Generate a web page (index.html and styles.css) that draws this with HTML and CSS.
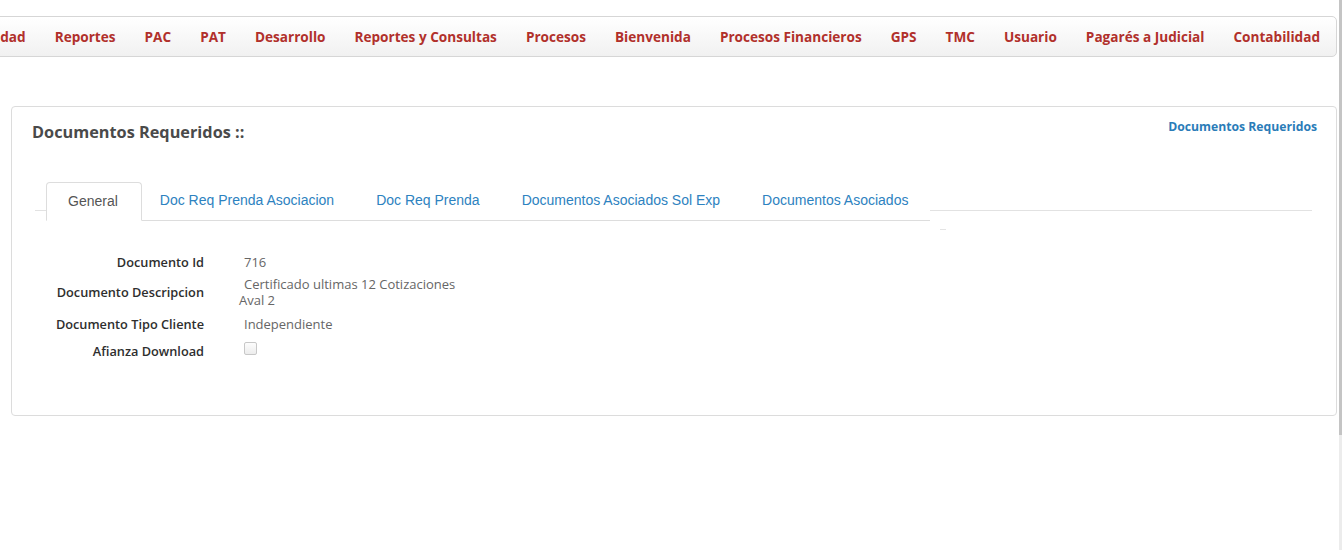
FILE: index.html
```html
<!DOCTYPE html>
<html lang="es">
<head>
<meta charset="utf-8">
<title>Documentos Requeridos</title>
<link rel="stylesheet" href="styles.css">
</head>
<body>
<div class="scrollbar"></div>
<nav class="topnav">
  <ul class="menu">
    <li>Contabilidad</li>
    <li>Reportes</li>
    <li>PAC</li>
    <li>PAT</li>
    <li>Desarrollo</li>
    <li>Reportes y Consultas</li>
    <li>Procesos</li>
    <li>Bienvenida</li>
    <li>Procesos Financieros</li>
    <li>GPS</li>
    <li>TMC</li>
    <li>Usuario</li>
    <li>Pagarés a Judicial</li>
    <li>Contabilidad</li>
  </ul>
</nav>

<section class="panel">
  <div class="panel-head">
    <h2 class="title">Documentos Requeridos ::</h2>
    <a class="crumb" href="#">Documentos Requeridos</a>
  </div>

  <div class="tabs-wrap">
    <ul class="tabs">
      <li class="tab active">General</li>
      <li class="tab">Doc Req Prenda Asociacion</li>
      <li class="tab">Doc Req Prenda</li>
      <li class="tab">Documentos Asociados Sol Exp</li>
      <li class="tab">Documentos Asociados</li>
    </ul>
    <span class="tab-tick"></span>
  </div>

  <div class="form">
    <div class="row r1">
      <div class="label">Documento Id</div>
      <div class="value">716</div>
    </div>
    <div class="row r2">
      <div class="label">Documento Descripcion</div>
      <div class="value indent">Certificado ultimas 12 Cotizaciones<br>Aval 2</div>
    </div>
    <div class="row r3">
      <div class="label">Documento Tipo Cliente</div>
      <div class="value">Independiente</div>
    </div>
    <div class="row r4">
      <div class="label">Afianza Download</div>
      <div class="value"><span class="check"></span></div>
    </div>
  </div>
</section>
</body>
</html>
```

FILE: styles.css
```css
html, body {
  margin: 0;
  padding: 0;
  background: #fff;
}

body {
  font-family: "Open Sans", "DejaVu Sans", sans-serif;
  color: #333;
}

.scrollbar {
  position: fixed;
  top: 0;
  right: 0;
  width: 3px;
  height: 550px;
  background: linear-gradient(to bottom, #c4c4c4 0, #c4c4c4 435px, #ececec 435px);
}

.topnav {
  margin: 16px 5px 0 -10px;
  height: 39px;
  border: 1px solid #d6d6d6;
  border-radius: 5px;
  background: linear-gradient(to bottom, #ffffff 0%, #f1f1f1 100%);
  display: flex;
  justify-content: flex-end;
  overflow: hidden;
}

.menu {
  list-style: none;
  margin: 0;
  padding: 0 16px 0 0;
  display: flex;
  flex-shrink: 0;
  align-items: center;
}

.menu li {
  padding: 0 14.5px;
  font-size: 13.6px;
  font-weight: 700;
  color: #b1302b;
  white-space: nowrap;
  line-height: 39px;
}

.menu li:last-child {
  padding-right: 0;
}

.panel {
  margin: 49px 5px 0 11px;
  height: 308px;
  border: 1px solid #dcdcdc;
  border-radius: 4px;
  display: flex;
  flex-direction: column;
}

.panel-head {
  display: flex;
  justify-content: space-between;
  align-items: flex-start;
  padding: 0 19px 0 20px;
}

.title {
  margin: 14px 0 0;
  font-size: 16.3px;
  font-weight: 700;
  color: #4a4a4a;
  line-height: 22px;
}

.crumb {
  margin-top: 11px;
  font-size: 12.2px;
  font-weight: 700;
  color: #2a7cb8;
  text-decoration: none;
  line-height: 18px;
}

.tabs-wrap {
  position: relative;
  margin: 39px 24px 0 23px;
  height: 28px;
  padding-left: 11px;
  border-bottom: 1px solid #e2e2e2;
}

.tabs {
  list-style: none;
  margin: 0;
  padding: 0;
  display: inline-flex;
  height: 38px;
  background: #fff;
  border-bottom: 1px solid #dddddd;
  font-family: "Liberation Sans", Arial, sans-serif;
  font-size: 14px;
}

.tab {
  padding: 0 21px;
  line-height: 36px;
  color: #2d82c0;
  white-space: nowrap;
}

.tab.active {
  padding: 0 23px 0 21px;
  color: #555;
  border: 1px solid #dddddd;
  border-bottom-color: #fff;
  border-radius: 4px 4px 0 0;
  margin-bottom: -1px;
  background: #fff;
  line-height: 37px;
}

.tab.active + .tab {
  padding-left: 18px;
}

.tab:last-child {
  padding-right: 22px;
}

.tab-tick {
  position: absolute;
  left: 905px;
  top: 47px;
  width: 6px;
  height: 1px;
  background: #e4e4e4;
}

.form {
  margin-top: 37px;
  display: flex;
  flex-direction: column;
}

.row {
  display: grid;
  grid-template-columns: 192px auto;
  column-gap: 40px;
  align-items: center;
}

.r1 { min-height: 28px; }
.r2 { min-height: 32px; }
.r3 { min-height: 32px; }
.r4 { min-height: 22px; }

.label {
  text-align: right;
  font-size: 12.75px;
  font-weight: 600;
  color: #2e2e2e;
}

.value {
  font-size: 13px;
  color: #666;
  line-height: 16px;
}

.indent {
  margin-left: -5px;
  text-indent: 5px;
}

.r4 .value {
  align-self: start;
  padding-top: 2px;
}

.check {
  display: block;
  width: 11px;
  height: 11px;
  border: 1px solid #c8c8c8;
  border-radius: 2px;
  background: linear-gradient(#fdfdfd, #ececec);
}
```
